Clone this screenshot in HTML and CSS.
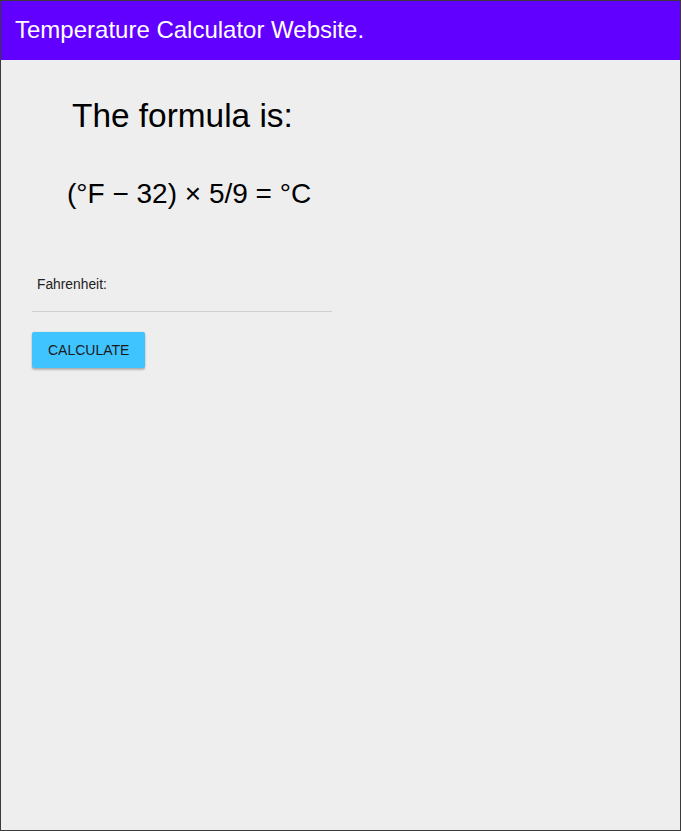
FILE: index.html
```html
<!DOCTYPE html>
<html>
<head>
<meta charset="utf-8">
<link rel="stylesheet" href="styles.css">
</head>
<body>
<div class="frame">
  <header class="topbar">
    <h1 class="title">Temperature Calculator Website.</h1>
  </header>
  <main class="content">
    <h2 class="formula-title">The formula is:</h2>
    <p class="formula">(°F − 32) × 5/9 = °C</p>
    <div class="field">
      <label class="field-label" for="f">Fahrenheit:</label>
      <input class="field-input" id="f" type="text">
    </div>
    <button class="btn" type="button">CALCULATE</button>
  </main>
</div>
</body>
</html>
```
FILE: styles.css
```css
html, body {
  margin: 0;
  padding: 0;
  height: 100%;
}
body {
  font-family: "Liberation Sans", Arial, sans-serif;
  background: #eeeeee;
}
.frame {
  box-sizing: border-box;
  height: 831px;
  border: 1px solid #3a3a3a;
  background: #eeeeee;
  display: flex;
  flex-direction: column;
}
.topbar {
  height: 59px;
  background: #6200ff;
  display: flex;
  align-items: center;
  padding-left: 14px;
}
.title {
  margin: 0;
  font-weight: normal;
  font-size: 24px;
  color: #ffffff;
  line-height: 1;
  padding-bottom: 2px;
}
.content {
  padding-left: 31px;
}
.formula-title {
  margin: 36px 0 0 40px;
  font-weight: normal;
  font-size: 33.4px;
  line-height: 40px;
  color: #000;
}
.formula {
  margin: 42px 0 0 35px;
  font-size: 28px;
  line-height: 32px;
  color: #000;
}
.field {
  width: 300px;
  margin-top: 67px;
  display: flex;
  flex-direction: column;
}
.field-label {
  font-size: 13.8px;
  color: #222;
  padding-left: 5px;
  line-height: 16px;
}
.field-input {
  border: none;
  border-bottom: 1px solid #cfcfcf;
  background: transparent;
  height: 18px;
  padding: 0;
  outline: none;
}
.btn {
  margin-top: 20px;
  height: 36px;
  padding: 0 16px;
  background: #40c4ff;
  border: none;
  border-radius: 2px;
  font-family: "Liberation Sans", Arial, sans-serif;
  font-size: 14px;
  color: #1b1b1b;
  box-shadow: 0 2px 2px rgba(0,0,0,0.24), 0 0 2px rgba(0,0,0,0.12);
}
```
